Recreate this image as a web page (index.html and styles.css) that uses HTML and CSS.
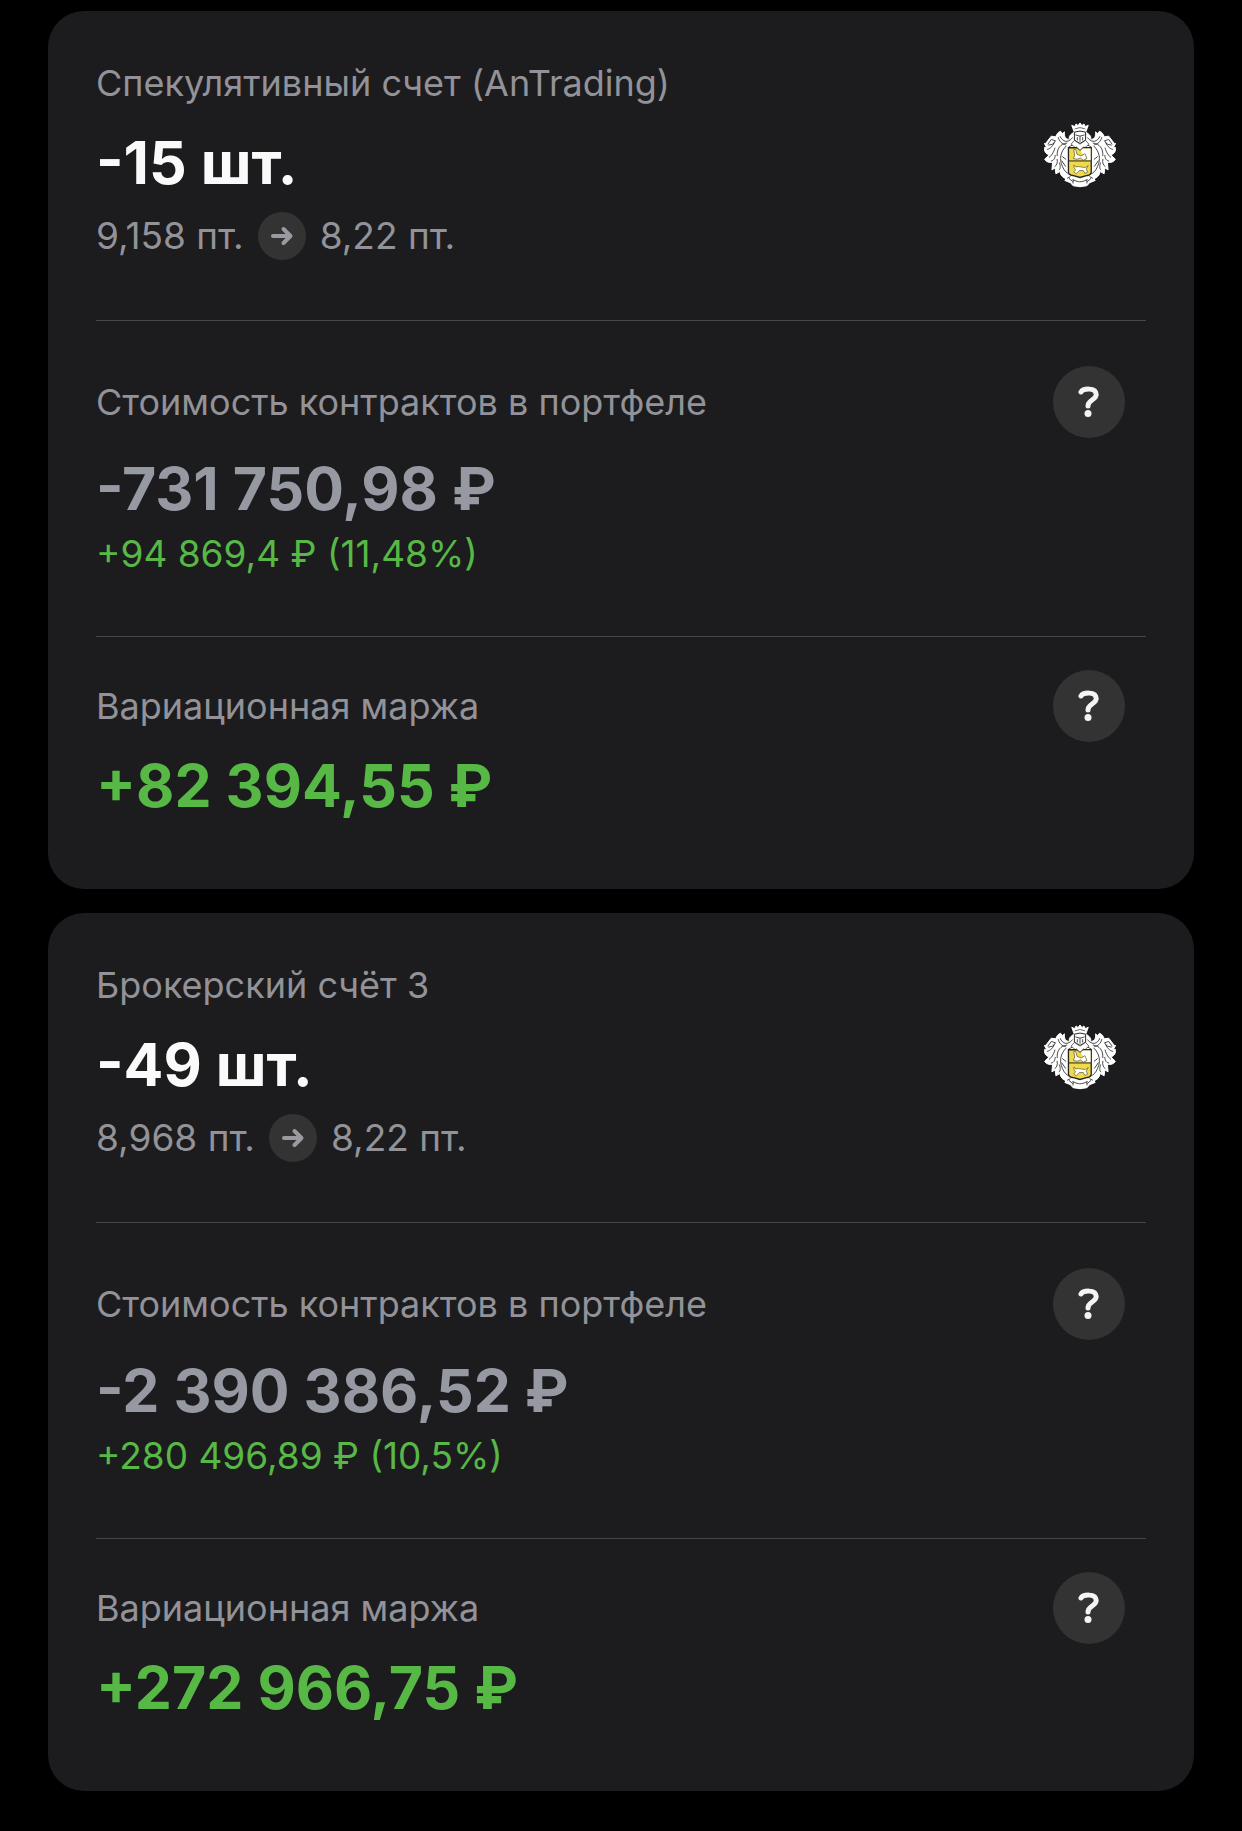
FILE: index.html
```html
<!DOCTYPE html>
<html lang="ru">
<head>
<meta charset="utf-8">
<meta name="viewport" content="width=device-width, initial-scale=1">
<title>Портфель</title>
<link rel="stylesheet" href="styles.css">
</head>
<body>
<svg class="sprite" aria-hidden="true">
  <symbol id="arrow" viewBox="0 0 48 48">
    <path d="M15 24H32M25.500 17L32.500 24L25.500 31" fill="none" stroke="currentColor" stroke-width="4" stroke-linecap="round" stroke-linejoin="round"/>
  </symbol>
  <symbol id="question" viewBox="0 0 72 72">
    <path d="M28 26C30 22.500 42.800 21 43.200 28.500C43.400 34 35 33.500 35 40" fill="none" stroke="currentColor" stroke-width="5" stroke-linecap="round"/>
    <circle cx="35" cy="47.500" r="3.500" fill="currentColor"/>
  </symbol>
  <g id="mantling">
    <path fill="#fff" stroke="#fff" stroke-width="3" stroke-linejoin="round" d="M151 80L133 66L127 71C119 77 117 82 119 89C109 89 102 81 104 66L98 71L92 64C85 67 80 72 78 81L64 79L47 101L43 101L50 113L44 113C42 124 47 132 57 136L44 149C49 158 59 160 68 158L66 181L76 175L78 193L90 186C92 198 99 205 109 208L105 213L122 220L130 229L151 232Z"/>
    <g fill="none" stroke="#242425" stroke-width="2.500" stroke-linecap="round" stroke-linejoin="round">
      <path d="M128 84C114 102 98 96 91 80M111 100C92 102 80 116 82 138M109 109C92 126 87 148 98 171C103 184 111 191 119 194"/>
      <path d="M54 103L64 89L77 93L69 103L56 106M73 99C67 113 57 118 52 119M75 115C71 130 64 138 58 143M76 137C75 149 70 154 64 154M82 149C84 161 80 167 75 171M89 160C93 173 91 178 88 181"/>
      <path d="M85 83C89 96 97 103 107 105M98 141L108 149M96 154L107 170"/>
      <path d="M129 105L117 112M121 202L113 206M118 207L128 216M130 211C140 216 146 217 151 217M130 211V221"/>
    </g>
  </g>
  <symbol id="crest" viewBox="42 37 218 198">
    <use href="#mantling"/>
    <use href="#mantling" transform="translate(302 0) scale(-1 1)"/>
    <path d="M130 57L126 46L135 50L139 42L145 47L151 39L157 47L163 42L167 50L176 46L172 57L169 65H133Z" fill="#fff" stroke="#fff" stroke-width="3" stroke-linejoin="round"/>
    <path d="M135 57L151 53L167 57" fill="none" stroke="#242425" stroke-width="2"/>
    <path d="M134 67Q151 60 168 67V91L151 101L134 91Z" fill="#fff" stroke="#242425" stroke-width="3"/>
    <path d="M137 75L151 79L165 75M151 79V96M143 82V92M159 82V92" fill="none" stroke="#242425" stroke-width="2.500"/>
    <path d="M134 92L124 103L136 113L151 119L168 112L178 103L168 92L151 103Z" fill="#fff" stroke="#242425" stroke-width="2"/>
    <path d="M116 114H185V187Q185 197 173 198L151 204L129 198Q116 197 116 187Z" fill="#f1d94c" stroke="#242425" stroke-width="4"/>
    <path d="M154 116H183V152H172Q167 137 154 127Z" fill="#fff"/>
    <path d="M117 154H184" stroke="#242425" stroke-width="3"/>
    <path d="M131 146L135 136L132 120L138 119L142 134L154 139L166 132L172 146L161 152L152 145L142 149Z" fill="#fff" stroke="#55501f" stroke-width="2"/>
    <path d="M133 166L138 172L146 171L167 174L176 168L170 179L174 188L166 192L161 183L149 183L139 193L132 187L138 181L133 175Z" fill="#fff" stroke="#55501f" stroke-width="2"/>
    <path d="M139 111L151 122L163 111" fill="#fff" stroke="#242425" stroke-width="3"/>
  </symbol>
</svg>

<main class="accounts">
  <article class="card">
    <header class="section account">
      <div class="account-info">
        <p class="label">Спекулятивный счет (AnTrading)</p>
        <h2 class="amount">-15 шт.</h2>
        <div class="prices">
          <span>9,158 пт.</span>
          <svg class="arrow" aria-hidden="true"><use href="#arrow"/></svg>
          <span>8,22 пт.</span>
        </div>
      </div>
      <svg class="crest" aria-hidden="true"><use href="#crest"/></svg>
    </header>
    <section class="section cost">
      <div class="section-head">
        <p class="label">Стоимость контрактов в портфеле</p>
        <button class="help" type="button" aria-label="Справка"><svg><use href="#question"/></svg></button>
      </div>
      <p class="amount muted">-731 750,98 ₽</p>
      <p class="change">+94 869,4 ₽ (11,48%)</p>
    </section>
    <section class="section margin">
      <div class="section-head">
        <p class="label">Вариационная маржа</p>
        <button class="help" type="button" aria-label="Справка"><svg><use href="#question"/></svg></button>
      </div>
      <p class="amount gain">+82 394,55 ₽</p>
    </section>
  </article>

  <article class="card">
    <header class="section account">
      <div class="account-info">
        <p class="label">Брокерский счёт 3</p>
        <h2 class="amount">-49 шт.</h2>
        <div class="prices">
          <span>8,968 пт.</span>
          <svg class="arrow" aria-hidden="true"><use href="#arrow"/></svg>
          <span>8,22 пт.</span>
        </div>
      </div>
      <svg class="crest" aria-hidden="true"><use href="#crest"/></svg>
    </header>
    <section class="section cost">
      <div class="section-head">
        <p class="label">Стоимость контрактов в портфеле</p>
        <button class="help" type="button" aria-label="Справка"><svg><use href="#question"/></svg></button>
      </div>
      <p class="amount muted">-2 390 386,52 ₽</p>
      <p class="change">+280 496,89 ₽ (10,5%)</p>
    </section>
    <section class="section margin">
      <div class="section-head">
        <p class="label">Вариационная маржа</p>
        <button class="help" type="button" aria-label="Справка"><svg><use href="#question"/></svg></button>
      </div>
      <p class="amount gain">+272 966,75 ₽</p>
    </section>
  </article>
</main>
</body>
</html>
```

FILE: styles.css
```css
* {
  box-sizing: border-box;
}

body {
  margin: 0;
  background: #000;
  color: #929298;
  font-family: Inter, "Liberation Sans", sans-serif;
  font-size: 36px;
  line-height: 44px;
}

p,
h2 {
  margin: 0;
}

.sprite {
  position: absolute;
  width: 0;
  height: 0;
}

.accounts {
  display: flex;
  flex-direction: column;
  gap: 24px;
  padding: 11px 48px 40px;
}

.card {
  padding: 0 48px;
  border-radius: 36px;
  background: #1c1c1e;
}

.section + .section {
  border-top: 1px solid #464648;
}

.account {
  display: flex;
  justify-content: space-between;
  align-items: flex-start;
  padding: 50px 30px 60px 0;
}

.account .amount {
  margin-top: 22px;
}

.amount {
  color: #fafafa;
  font-size: 59px;
  font-weight: 700;
  line-height: 72px;
}

.amount.muted {
  color: #9699a2;
}

.amount.gain {
  color: #57b846;
}

.prices {
  display: flex;
  align-items: center;
  gap: 14px;
  margin-top: 13px;
  font-size: 37px;
}

.arrow {
  width: 48px;
  height: 48px;
  border-radius: 50%;
  background: #333;
  color: #9a9aa2;
}

.crest {
  width: 72px;
  height: 66px;
  margin-top: 61px;
}

.section-head {
  display: flex;
  justify-content: space-between;
  align-items: center;
  padding-right: 21px;
}

.help {
  width: 72px;
  height: 72px;
  padding: 0;
  border: 0;
  border-radius: 50%;
  background: #333;
  color: #f4f4f4;
}

.help svg {
  display: block;
  width: 72px;
  height: 72px;
}

.cost {
  padding: 45px 0 60px;
}

.cost .amount {
  margin-top: 15px;
}

.change {
  margin-top: 7px;
  color: #57b846;
  font-size: 37px;
}

.margin {
  padding: 33px 0 67px;
}

.margin .amount {
  margin-top: 8px;
}
```
